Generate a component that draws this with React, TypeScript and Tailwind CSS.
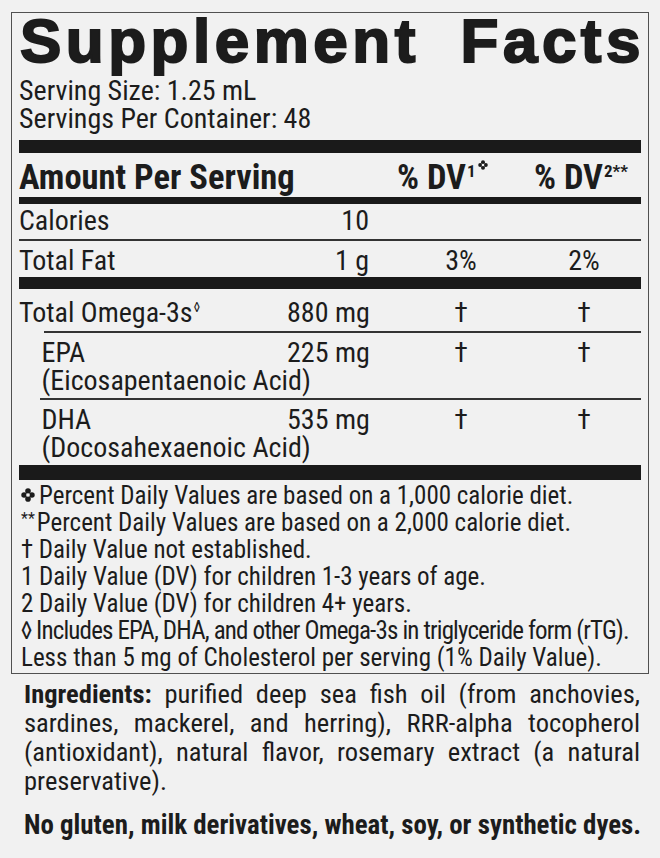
import React from 'react';

function Clover({ className = '' }: { className?: string }) {
  return (
    <svg viewBox="0 0 10 10" className={className} fill="#1c1c1c">
      <circle cx="5" cy="2.2" r="2" />
      <circle cx="5" cy="7.8" r="2" />
      <circle cx="2.2" cy="5" r="2" />
      <circle cx="7.8" cy="5" r="2" />
      <circle cx="5" cy="5" r="1.3" fill="#f1f1f1" />
    </svg>
  );
}

function Row({ name, amount, dv1, dv2, className = '' }: { name: React.ReactNode; amount?: string; dv1?: string; dv2?: string; className?: string }) {
  return (
    <div className={`grid grid-cols-[268px_82px_150px_1fr] items-start ${className}`}>
      <div>{name}</div>
      <div className="whitespace-nowrap text-right">{amount}</div>
      <div className="pl-[34px] text-center">{dv1}</div>
      <div className="pl-2 text-center">{dv2}</div>
    </div>
  );
}

export default function App() {
  return (
    <div className="min-h-screen w-[660px] bg-[#f1f1f1] text-[#1c1c1c] [font-family:Roboto,sans-serif] [font-stretch:condensed]">
      <div className="pt-[12px] px-[11px]">
        <div className="border-[1.5px] border-[#505050] px-[7px] pb-[2px]">
          <div className="-mt-[3px] flex justify-between text-[62px] leading-[62px] font-bold tracking-[4.5px] [font-family:'Liberation_Sans',Arial,sans-serif] [font-stretch:normal] [-webkit-text-stroke:2px_#1c1c1c]">
            <span className="pl-[1px]">Supplement</span>
            <span className="-mr-[4px]">Facts</span>
          </div>
          <div className="mt-[5px] text-[28px] leading-[28px]">
            <div>Serving Size: 1.25 mL</div>
            <div>Servings Per Container: 48</div>
          </div>
          <div className="mt-[6.5px] h-[13px] bg-[#1a1a1a]" />
          <div className="grid h-[44px] grid-cols-[268px_82px_150px_1fr] text-[34.5px] font-bold leading-[48px]">
            <div className="col-span-2 whitespace-nowrap">Amount Per Serving</div>
            <div className="pl-[28px] whitespace-nowrap">
              % DV<span className="relative -top-[12px] ml-[1px] text-[17px] leading-none">1</span>
              <Clover className="relative -top-[14px] ml-[2px] inline-block h-[10px] w-[10px]" />
            </div>
            <div className="pl-[15px] whitespace-nowrap">
              % DV<span className="relative -top-[12px] ml-[1px] text-[17px] leading-none">2**</span>
            </div>
          </div>
          <div className="h-[7px] bg-[#1a1a1a]" />
          <div className="text-[28px] leading-[33px]">
            <Row name="Calories" amount="10" className="h-[35px]" />
            <div className="h-[2px] bg-[#333]" />
            <Row name="Total Fat" amount="1 g" dv1="3%" dv2="2%" className="h-[36px] pt-[3px]" />
          </div>
          <div className="h-[12px] bg-[#1a1a1a]" />
          <div className="text-[28px] leading-[28px]">
            <Row
              className="h-[42px] pt-[10px]"
              name={
                <span className="whitespace-nowrap">
                  Total Omega-3s<span className="relative -top-[10px] ml-[1px] text-[14px] leading-none">◊</span>
                </span>
              }
              amount="880 mg"
              dv1="†"
              dv2="†"
            />
            <div className="ml-[24.5px] h-[2px] bg-[#333]" />
            <Row
              className="h-[65px] pt-[6px]"
              name={
                <div className="whitespace-nowrap pl-[22.5px]">
                  EPA
                  <br />
                  (Eicosapentaenoic Acid)
                </div>
              }
              amount="225 mg"
              dv1="†"
              dv2="†"
            />
            <div className="ml-[20.5px] h-[2px] bg-[#333]" />
            <Row
              className="h-[65px] pt-[6px]"
              name={
                <div className="whitespace-nowrap pl-[22.5px]">
                  DHA
                  <br />
                  (Docosahexaenoic Acid)
                </div>
              }
              amount="535 mg"
              dv1="†"
              dv2="†"
            />
          </div>
          <div className="h-[15px] bg-[#1a1a1a]" />
          <div className="pt-[2px] pl-[2px] text-[25px] leading-[27px] whitespace-nowrap">
            <div className="flex h-[27px] items-center">
              <Clover className="mr-[4px] h-[14px] w-[14px]" />
              Percent Daily Values are based on a 1,000 calorie diet.
            </div>
            <div>
              <span className="relative -top-[7px] mr-[2px] text-[16px] leading-none">**</span>Percent Daily Values are based on a 2,000 calorie diet.
            </div>
            <div>† Daily Value not established.</div>
            <div>1 Daily Value (DV) for children 1-3 years of age.</div>
            <div>2 Daily Value (DV) for children 4+ years.</div>
            <div className="tracking-[-0.85px]">◊ Includes EPA, DHA, and other Omega-3s in triglyceride form (rTG).</div>
            <div>Less than 5 mg of Cholesterol per serving (1% Daily Value).</div>
          </div>
        </div>
        <div className="mt-[5px] pl-[13px] pr-[9px] text-[26.5px] leading-[29px]">
          <div className="[text-align-last:justify]">
            <span className="font-bold">Ingredients:</span> purified deep sea fish oil (from anchovies,
          </div>
          <div className="[text-align-last:justify]">sardines, mackerel, and herring), RRR-alpha tocopherol</div>
          <div className="[text-align-last:justify]">(antioxidant), natural flavor, rosemary extract (a natural</div>
          <div>preservative).</div>
          <div className="mt-[16px] text-[26.9px] font-bold whitespace-nowrap">No gluten, milk derivatives, wheat, soy, or synthetic dyes.</div>
        </div>
      </div>
    </div>
  );
}
